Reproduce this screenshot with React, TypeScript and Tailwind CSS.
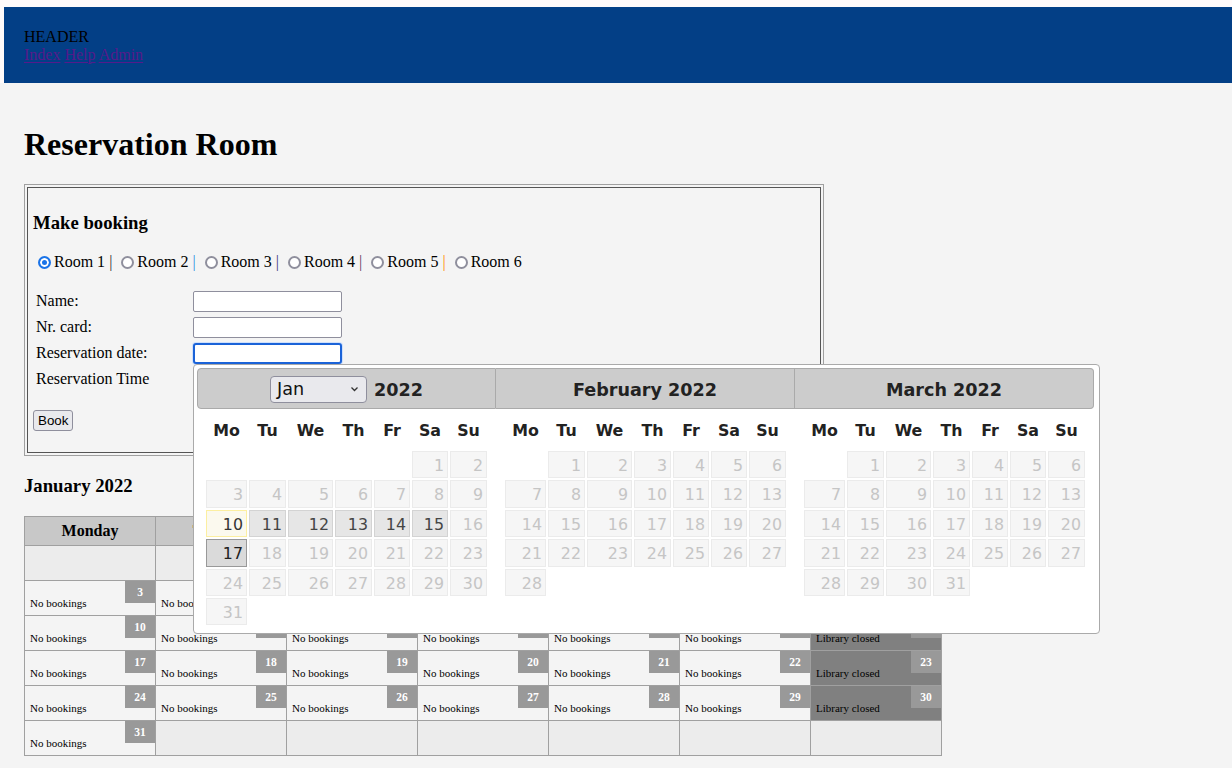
import React from "react";

const dayNames = ["Mo", "Tu", "We", "Th", "Fr", "Sa", "Su"];
const cols = "grid grid-cols-[41px_37px_45px_37px_36px_36px_37px] gap-x-[2px]";

type St = "dis" | "today" | "def" | "act";

function DayCell({ d, st }: { d: number; st: St }) {
  const cls =
    st === "dis"
      ? "bg-[#f6f6f6] border-[#ebebeb] text-[#c5c5c5]"
      : st === "today"
      ? "bg-[#fbf9ee] border-[#fcefa1] text-[#363636]"
      : st === "def"
      ? "bg-[#e6e6e6] border-[#d3d3d3] text-[#454545]"
      : "bg-[#dadada] border-[#999999] text-[#212121]";
  return (
    <div className={`h-[27.4px] border text-right pr-[3px] pt-[2px] leading-[23.4px] ${cls}`}>{d}</div>
  );
}

function MonthGrid({
  offset,
  days,
  stateOf,
}: {
  offset: number;
  days: number;
  stateOf: (d: number) => St;
}) {
  const cells: React.ReactNode[] = [];
  for (let i = 0; i < offset; i++) cells.push(<div key={"e" + i} />);
  for (let d = 1; d <= days; d++) cells.push(<DayCell key={d} d={d} st={stateOf(d)} />);
  return (
    <div className="px-[9px]">
      <div className={`${cols} h-[42px] pt-[2px] items-center`}>
        {dayNames.map((n) => (
          <div key={n} className="text-center font-bold text-[#222]">
            {n}
          </div>
        ))}
      </div>
      <div className={`${cols} gap-y-[2px]`}>{cells}</div>
    </div>
  );
}

function Chevron() {
  return (
    <svg width="9" height="6" viewBox="0 0 9 6" fill="none">
      <path d="M1.5 1.5l3 3 3-3" stroke="#333" strokeWidth="1.3" />
    </svg>
  );
}

function DatePicker() {
  const janState = (d: number): St => {
    if (d === 10) return "today";
    if (d >= 11 && d <= 15) return "def";
    if (d === 17) return "act";
    return "dis";
  };
  const dis = () => "dis" as St;
  return (
    <div className="absolute left-[193px] top-[364px] w-[907px] bg-white border border-[#aaaaaa] rounded-[4px] pt-[3px] px-[3px] pb-[8px] font-['DejaVu_Sans',sans-serif] text-[15.84px] text-[#222]">
      <div className="flex items-start">
        <div className="w-[299px]">
          <div className="h-[41px] pt-[3px] bg-[#cccccc] border border-[#aaaaaa] rounded-l-[4px] flex items-center justify-center gap-[7px] font-bold text-[17.6px]">
            <div className="w-[97px] h-[27px] -mt-[2px] bg-[#e9e9ed] border border-[#8f8f9d] rounded-[4px] flex items-center justify-between pl-[6px] pr-[7px] font-normal text-[17.6px] text-[#111]">
              <span>Jan</span>
              <Chevron />
            </div>
            <span>2022</span>
          </div>
          <MonthGrid offset={5} days={31} stateOf={janState} />
        </div>
        <div className="w-[299px]">
          <div className="h-[41px] pt-[3px] bg-[#cccccc] border border-l-0 border-[#aaaaaa] flex items-center justify-center font-bold text-[17.6px]">
            February 2022
          </div>
          <MonthGrid offset={1} days={28} stateOf={dis} />
        </div>
        <div className="w-[299px]">
          <div className="h-[41px] pt-[3px] bg-[#cccccc] border border-l-0 border-[#aaaaaa] rounded-r-[4px] flex items-center justify-center font-bold text-[17.6px]">
            March 2022
          </div>
          <MonthGrid offset={1} days={31} stateOf={dis} />
        </div>
      </div>
    </div>
  );
}

type Cell = { kind: "empty" } | { kind: "day"; d: number } | { kind: "closed"; d: number };

function buildCells(): Cell[] {
  const cells: Cell[] = [];
  for (let i = 0; i < 5; i++) cells.push({ kind: "empty" });
  cells.push({ kind: "day", d: 1 });
  cells.push({ kind: "closed", d: 2 });
  for (let d = 3; d <= 30; d++) {
    const dow = (d - 3) % 7;
    cells.push(dow === 6 ? { kind: "closed", d } : { kind: "day", d });
  }
  cells.push({ kind: "day", d: 31 });
  for (let i = 0; i < 6; i++) cells.push({ kind: "empty" });
  return cells;
}

function MonthTable() {
  const heads = ["Monday", "Tuesday", "Wednesday", "Thursday", "Friday", "Saturday", "Sunday"];
  const cells = buildCells();
  return (
    <div className="w-[918px] border-l border-t border-[#a0a0a0] grid grid-cols-[repeat(7,131px)]">
      {heads.map((h) => (
        <div
          key={h}
          className="h-[29px] bg-[#c8c8c8] border-r border-b border-[#a0a0a0] flex items-center justify-center font-bold"
        >
          {h}
        </div>
      ))}
      {cells.map((c, i) => {
        if (c.kind === "empty")
          return <div key={i} className="h-[35px] bg-[#ececec] border-r border-b border-[#a0a0a0]" />;
        const closed = c.kind === "closed";
        return (
          <div
            key={i}
            className={`relative h-[35px] border-r border-b border-[#a0a0a0] flex items-end pl-[5px] pb-[5px] text-[11px] leading-[13px] ${
              closed ? "bg-[#808080]" : "bg-[#f4f4f4]"
            }`}
          >
            <div className="absolute top-0 right-0 w-[30px] h-[22px] bg-[#999999] text-white font-bold text-[11.5px] flex items-center justify-center">
              {c.d}
            </div>
            <span className="relative">{closed ? "Library closed" : "No bookings"}</span>
          </div>
        );
      })}
    </div>
  );
}

function Radio({ checked }: { checked?: boolean }) {
  return (
    <input
      type="radio"
      name="room"
      defaultChecked={checked}
      className="appearance-none inline-block ml-[5px] mr-[3px] w-[13px] h-[13px] align-[-2px] rounded-full border-2 border-[#8f8f9d] bg-white checked:border-[#1a73e8] checked:bg-[#1a73e8] checked:shadow-[inset_0_0_0_2px_#ffffff]"
    />
  );
}

export default function App() {
  const pipes = ["#333333", "#2f8fe0", "#3b3a7a", "#5b3a5e", "#ff8c00"];
  const fields = ["Name:", "Nr. card:", "Reservation date:", "Reservation Time"];
  const link = "underline decoration-solid decoration-1 underline-offset-[2px] text-[#551a8b]";
  return (
    <div className="relative min-h-screen bg-[#f4f4f4] font-['Liberation_Serif',serif] text-black text-[16px]">
      <div className="bg-[#fffafa] pt-[7px] pl-[4px]">
        <div className="bg-[#033f86] h-[76px] pl-[20px] pt-[21px] leading-[18px]">
          <div>HEADER</div>
          <div className="text-[#551a8b]">
            <a href="#" className={link}>Index</a>{" "}
            <a href="#" className={link}>Help</a>{" "}
            <a href="#" className={link}>Admin</a>
          </div>
        </div>
      </div>
      <div className="px-[24px] pb-[13px]">
        <h1 className="mt-[43px] text-[32px] font-bold leading-[37px]">Reservation Room</h1>
        <div className="mt-[21px] w-[800px] border border-[#a0a0a0] p-[2px]">
          <div className="border border-[#555555] px-[5px] pt-[6px] pb-[21px]">
            <h3 className="mt-[18px] h-[22px] leading-[22px] text-[18.72px] font-bold">Make booking</h3>
            <div className="mt-[19px] h-[18px] leading-[18px] whitespace-nowrap">
              {[1, 2, 3, 4, 5, 6].map((n) => (
                <React.Fragment key={n}>
                  <Radio checked={n === 1} />
                  {"Room " + n}
                  {n < 6 && (
                    <>
                      {" "}
                      <span style={{ color: pipes[n - 1] }}>|</span>{" "}
                    </>
                  )}
                </React.Fragment>
              ))}
            </div>
            <div className="mt-[17px]">
              {fields.map((f, i) => (
                <div key={f} className="flex items-center h-[26px]">
                  <div className="w-[160px] pl-[3px] leading-[18px]">{f}</div>
                  {i < 2 && (
                    <input
                      type="text"
                      className="w-[149px] h-[21px] bg-white border border-[#8f8f9d] rounded-[2px]"
                    />
                  )}
                  {i === 2 && (
                    <input
                      type="text"
                      className="w-[149px] h-[21px] bg-white border-2 border-[#1b63d8] rounded-[3px] shadow-[0_0_0_1px_#cfe0fb]"
                    />
                  )}
                </div>
              ))}
            </div>
            <button className="block mt-[18px] h-[21px] px-[4px] bg-[#e9e9ed] border border-[#8f8f9d] rounded-[3px] font-['Liberation_Sans',sans-serif] text-[13.33px] leading-[19px]">
              Book
            </button>
          </div>
        </div>
        <h3 className="mt-[19px] h-[22px] leading-[22px] text-[18.72px] font-bold">January 2022</h3>
        <div className="mt-[19px]">
          <MonthTable />
        </div>
      </div>
      <DatePicker />
    </div>
  );
}
